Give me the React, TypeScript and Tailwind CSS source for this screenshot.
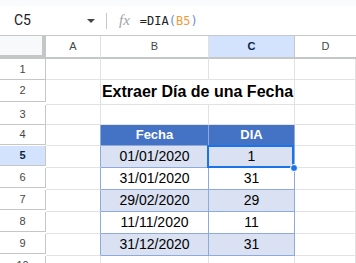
import React from "react";

const dates = ["01/01/2020", "31/01/2020", "29/02/2020", "11/11/2020", "31/12/2020"];
const days = ["1", "31", "29", "11", "31"];

export default function App() {
  const rowHeights = [21, 22, 20, 20, 20, 20, 20, 20, 20, 20];

  // returns the four cells (A..D) of a sheet row
  const cells = (r: number) => {
    const tableRow = r >= 4 && r <= 9;
    const dataIdx = r - 5;
    const light = r === 5 || r === 7 || r === 9;
    const tableBg = r === 4 ? "bg-[#4472c4]" : light ? "bg-[#d9e1f2]" : "bg-white";
    const tableBorder = "border-r border-b border-[#8eaadb]";
    const gridBorder = "border-r border-b border-[#e2e2e2]";

    if (r === 2) {
      return (
        <>
          <div className={`${gridBorder}`} />
          <div className="col-span-2 flex items-center justify-center border-r border-b border-[#e2e2e2] font-['Liberation_Sans',sans-serif] text-[16px] font-bold text-black">
            Extraer Día de una Fecha
          </div>
          <div className={`${gridBorder}`} />
        </>
      );
    }

    return (
      <>
        <div className={tableRow ? "border-r border-b border-[#8eaadb] [border-bottom-color:#e2e2e2]" : gridBorder} />
        <div
          className={`flex items-center justify-center ${tableRow ? `${tableBg} ${tableBorder}` : r === 3 ? "border-r border-b border-[#e2e2e2]" : gridBorder} ${r === 4 ? "font-bold text-white text-[13px]" : "text-black text-[14px]"}`}
        >
          {r === 4 ? "Fecha" : tableRow ? dates[dataIdx] : ""}
        </div>
        <div
          className={`relative flex items-center justify-center ${tableRow ? `${tableBg} ${tableBorder}` : gridBorder} ${r === 4 ? "font-bold text-white text-[13px]" : "text-black text-[14px]"}`}
        >
          {r === 4 ? "DIA" : tableRow ? days[dataIdx] : ""}
          {r === 5 && (
            <>
              <div className="absolute left-[-2px] top-[-1px] right-0 bottom-[-1px] border-2 border-[#1a73e8]" />
              <div className="absolute right-[-4px] bottom-[-5px] z-10 h-[8px] w-[8px] rounded-full border border-white bg-[#1a73e8]" />
            </>
          )}
        </div>
        <div className={gridBorder} />
      </>
    );
  };

  return (
    <div className="h-[263px] w-[356px] overflow-hidden bg-white font-['Liberation_Sans',Arial,sans-serif]">
      {/* top strip */}
      <div className="h-[6px] bg-[#f9fbfd]" />

      {/* formula bar */}
      <div className="flex h-[30px] items-center border-b border-[#c7c7c7]">
        <div className="w-[80px] pl-[14px] font-['Roboto',sans-serif] text-[14px] text-[#202124]">C5</div>
        <div className="ml-[7px] h-0 w-0 border-x-[4px] border-t-[4px] border-x-transparent border-t-[#444746]" />
        <div className="ml-[11px] h-[16px] w-px bg-[#c7c7c7]" />
        <div className="ml-[12px] font-['Liberation_Serif',serif] text-[15px] italic text-[#a0a3a7]">fx</div>
        <div className="ml-[10px] font-['DejaVu_Sans_Mono',monospace] text-[12px] text-[#202124]">
          =DIA<span className="text-[#6b8fcf]">(</span>
          <span className="text-[#f29a3a]">B5</span>
          <span className="text-[#6b8fcf]">)</span>
        </div>
      </div>

      {/* sheet */}
      <div className="grid grid-cols-[46px_55px_108px_86px_1fr]">
        {/* header row */}
        <div className="h-[23px] border-r-[4px] border-b-[4px] border-[#c4c7c5] bg-[#f8f9fa]" />
        <div className="flex h-[23px] items-center justify-center border-r border-b-2 border-[#e0e0e0] [border-bottom-color:#c4c7c5] text-[11px] text-[#444746]">A</div>
        <div className="flex h-[23px] items-center justify-center border-r border-b-2 border-[#e0e0e0] [border-bottom-color:#c4c7c5] text-[11px] text-[#444746]">B</div>
        <div className="flex h-[23px] items-center justify-center border-r border-b-2 border-[#c4c7c5] bg-[#d3e3fd] text-[11px] font-semibold text-[#0b1f4a]">C</div>
        <div className="flex h-[23px] items-center justify-center border-b-2 border-[#c4c7c5] text-[11px] text-[#444746]">D</div>

        {rowHeights.map((h, i) => {
          const r = i + 1;
          return (
            <React.Fragment key={r}>
              <div
                style={{ height: h }}
                className={`flex items-center justify-center border-r border-b border-[#c4c7c5] text-[11px] ${r === 5 ? "bg-[#d3e3fd] font-semibold text-[#0b1f4a]" : "text-[#444746]"}`}
              >
                {r}
              </div>
              {cells(r)}
            </React.Fragment>
          );
        })}
      </div>
    </div>
  );
}
